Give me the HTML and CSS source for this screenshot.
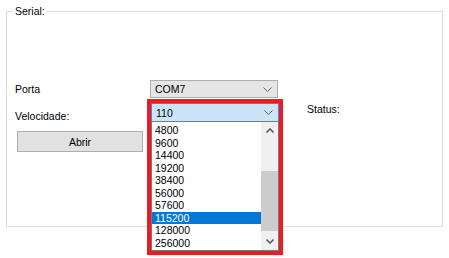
FILE: index.html
```html
<!DOCTYPE html>
<html lang="pt">
  <head>
    <meta charset="UTF-8" />
    <title>Serial</title>
    <link rel="stylesheet" href="styles.css">
  </head>
  <body>
    <div class="groupbox">
      <span class="group-title">Serial:</span>
      <div class="form">
        <label class="field-label label-porta">Porta</label>
        <div class="combo">
          <span>COM7</span>
          <svg class="chevron" width="9" height="5" viewBox="0 0 9 5"><polyline points="0.5,0.5 4.5,4.5 8.5,0.5" /></svg>
        </div>
        <span></span>

        <label class="field-label label-speed">Velocidade:</label>
        <div class="speed-wrap">
          <div class="combo combo-open">
            <span>110</span>
            <svg class="chevron" width="9" height="5" viewBox="0 0 9 5"><polyline points="0.5,0.5 4.5,4.5 8.5,0.5" /></svg>
          </div>
          <div class="dropdown">
            <ul class="options">
              <li>4800</li>
              <li>9600</li>
              <li>14400</li>
              <li>19200</li>
              <li>38400</li>
              <li>56000</li>
              <li>57600</li>
              <li class="selected">115200</li>
              <li>128000</li>
              <li>256000</li>
            </ul>
            <div class="scrollbar">
              <div class="scroll-btn">
                <svg width="8" height="5" viewBox="0 0 8 5"><polyline points="0.5,4.5 4,1 7.5,4.5" /></svg>
              </div>
              <div class="scroll-track"><div class="scroll-thumb"></div></div>
              <div class="scroll-btn">
                <svg width="8" height="5" viewBox="0 0 8 5"><polyline points="0.5,0.5 4,4 7.5,0.5" /></svg>
              </div>
            </div>
          </div>
          <div class="highlight"></div>
        </div>
        <span class="status">Status:</span>

        <button class="btn">Abrir</button>
      </div>
    </div>
  </body>
</html>
```

FILE: styles.css
```css
html,
body {
  height: 100%;
}

body {
  margin: 0;
  padding-top: 11px;
  box-sizing: border-box;
  background-color: #fff;
  font-family: "Liberation Sans", Arial, sans-serif;
  font-size: 10.5px;
  color: #000;
}

.groupbox {
  position: relative;
  margin: 0 6px;
  width: 437px;
  height: 216px;
  box-sizing: border-box;
  border: 1px solid #dcdcdc;
}

/* title sits over the top border, like a windows group box */
.group-title {
  position: absolute;
  top: -7px;
  left: 6px;
  padding: 0 2px;
  line-height: 12px;
  background-color: #fff;
}

.form {
  display: grid;
  grid-template-columns: 135px 129px auto;
  grid-template-rows: 18px 19px 21px;
  row-gap: 5px;
  padding: 68px 0 0 8px;
}

.field-label {
  line-height: 12px;
}

.label-porta {
  align-self: center;
}

.label-speed {
  align-self: end;
}

.combo {
  display: flex;
  justify-content: space-between;
  align-items: center;
  width: 128px;
  height: 18px;
  box-sizing: border-box;
  padding: 0 5px 0 4px;
  background-color: #e5e5e5;
  border: 1px solid #adadad;
}

.chevron polyline,
.scroll-btn polyline {
  fill: none;
  stroke: #606060;
  stroke-width: 1;
}

.speed-wrap {
  position: relative;
  margin-left: 1px;
}

.combo-open {
  height: 19px;
  background-color: #cce4f7;
  border-color: #3c8ad8;
}

.dropdown {
  position: absolute;
  top: 19px;
  left: 0;
  width: 128px;
  height: 129px;
  box-sizing: border-box;
  display: flex;
  background-color: #fff;
  border: 1px solid #7a7a7a;
  border-top: none;
  z-index: 2;
}

.options {
  list-style: none;
  margin: 0;
  padding: 2px 0 0;
  flex: 1;
}

.options li {
  height: 12.5px;
  line-height: 12.5px;
  padding-left: 3px;
}

.options li.selected {
  background-color: #0078d7;
  color: #fff;
}

.scrollbar {
  width: 17px;
  display: flex;
  flex-direction: column;
  background-color: #f0f0f0;
}

.scroll-btn {
  height: 17px;
  display: flex;
  align-items: center;
  justify-content: center;
}

.scroll-btn polyline {
  stroke-width: 1.6;
}

.scroll-track {
  flex: 1;
  padding-top: 32px;
  padding-bottom: 2px;
  display: flex;
  flex-direction: column;
}

.scroll-thumb {
  flex: 1;
  background-color: #cdcdcd;
}

.highlight {
  position: absolute;
  top: -4px;
  left: -4px;
  width: 136px;
  height: 156px;
  box-sizing: border-box;
  border: 4px solid #ed1c24;
  z-index: 3;
}

.status {
  align-self: start;
  margin-left: 28px;
  line-height: 12px;
}

.btn {
  grid-column: 1;
  margin-top: 4px;
  margin-left: 2px;
  width: 126px;
  height: 21px;
  font-family: inherit;
  font-size: 10.5px;
  background-color: #e1e1e1;
  border: 1px solid #adadad;
  border-radius: 0;
  padding: 0;
}
```
